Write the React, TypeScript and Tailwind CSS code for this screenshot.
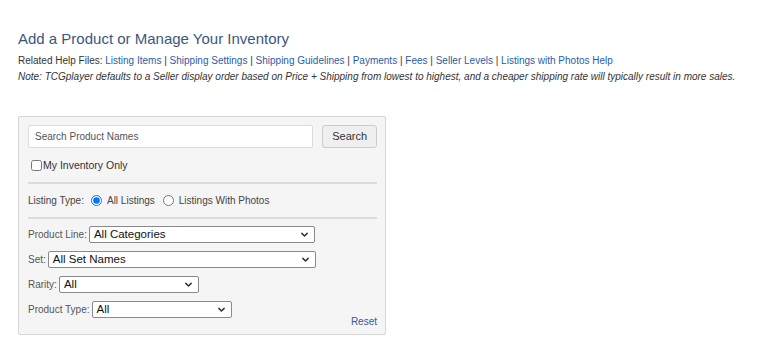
import React, { useState } from 'react';

const links = [
  'Listing Items',
  'Shipping Settings',
  'Shipping Guidelines',
  'Payments',
  'Fees',
  'Seller Levels',
  'Listings with Photos Help',
];

const Chevron = () => (
  <svg className="h-[9px] w-[9px] text-[#333]" fill="none" stroke="currentColor" viewBox="0 0 24 24">
    <path strokeLinecap="round" strokeLinejoin="round" strokeWidth="4" d="M5 9l7 7 7-7" />
  </svg>
);

const FakeSelect = ({ value, width }: { value: string; width: string }) => (
  <div className={`relative flex h-[17px] items-center rounded-[2px] border border-[#8a8a8a] bg-white pl-[4px] text-[11.5px] text-[#111] ${width}`}>
    <span className="leading-none">{value}</span>
    <div className="absolute inset-y-0 right-[5px] flex items-center pointer-events-none">
      <Chevron />
    </div>
  </div>
);

const App: React.FC = () => {
  const [search, setSearch] = useState('');
  const [mine, setMine] = useState(false);
  const [listingType, setListingType] = useState('all');

  return (
    <div className="min-h-screen bg-white px-[18px] pt-[30px] text-[#333]" style={{ fontFamily: '"Liberation Sans", Arial, sans-serif' }}>
      <h1 className="text-[15px] leading-[18px] text-[#3a5780]">Add a Product or Manage Your Inventory</h1>

      <p className="mt-[6px] text-[10px] leading-[14px] text-[#333]">
        Related Help Files:{' '}
        {links.map((l, i) => (
          <span key={l}>
            <a className="text-[#2a5ca8]" href="#">{l}</a>
            {i < links.length - 1 && ' | '}
          </span>
        ))}
      </p>
      <p className="mt-[2px] text-[10px] italic leading-[14px] text-[#333]">
        Note: TCGplayer defaults to a Seller display order based on Price + Shipping from lowest to highest, and a cheaper shipping rate will typically result in more sales.
      </p>

      <div className="mt-[32px] w-[368px] rounded-[2px] border border-[#d6d6d6] bg-[#f5f5f5] pl-[9px] pr-[8px] pt-[8px] pb-[6px] text-[10px]">
        <div className="flex items-center gap-[9px]">
          <input
            type="text"
            value={search}
            onChange={(e) => setSearch(e.target.value)}
            placeholder="Search Product Names"
            className="h-[23px] w-[287px] rounded-[2px] border border-[#dcdcdc] bg-white px-[6px] text-[10px] text-[#333] placeholder:text-[#555] outline-none"
          />
          <button className="h-[23px] w-[55px] rounded-[3px] border border-[#cccccc] bg-[#efefef] text-[11px] text-[#333]">
            Search
          </button>
        </div>

        <label className="mt-[10px] flex items-center text-[10.5px] text-[#333]">
          <input
            type="checkbox"
            checked={mine}
            onChange={() => setMine(!mine)}
            className="m-0 ml-[3px] mr-[1px] h-[11px] w-[11px]"
          />
          My Inventory Only
        </label>

        <hr className="mt-[8px] border-t-[2px] border-[#dcdcdc]" />

        <div className="mt-[9px] flex items-center text-[10px] text-[#444]">
          <span className="mr-[7px]">Listing Type:</span>
          <label className="flex items-center">
            <input
              type="radio"
              name="lt"
              checked={listingType === 'all'}
              onChange={() => setListingType('all')}
              className="m-0 mr-[5px] h-[11px] w-[11px]"
            />
            All Listings
          </label>
          <label className="ml-[8px] flex items-center">
            <input
              type="radio"
              name="lt"
              checked={listingType === 'photos'}
              onChange={() => setListingType('photos')}
              className="m-0 mr-[5px] h-[11px] w-[11px]"
            />
            Listings With Photos
          </label>
        </div>

        <hr className="mt-[9px] border-t-[2px] border-[#dcdcdc]" />

        <div className="mt-[7px] flex flex-col gap-[8px] text-[10px] text-[#555]">
          <div className="flex items-center gap-[2px]">
            <span>Product Line:</span>
            <FakeSelect value="All Categories" width="w-[226px]" />
          </div>
          <div className="flex items-center gap-[2px]">
            <span>Set:</span>
            <FakeSelect value="All Set Names" width="w-[268px]" />
          </div>
          <div className="flex items-center gap-[2px]">
            <span>Rarity:</span>
            <FakeSelect value="All" width="w-[140px]" />
          </div>
          <div className="flex items-center gap-[2px]">
            <span>Product Type:</span>
            <FakeSelect value="All" width="w-[140px]" />
          </div>
        </div>

        <div className="-mt-[2px] flex justify-end">
          <a href="#" className="text-[10px] leading-[12px] text-[#2a5ca8]">Reset</a>
        </div>
      </div>
    </div>
  );
};

export default App;
